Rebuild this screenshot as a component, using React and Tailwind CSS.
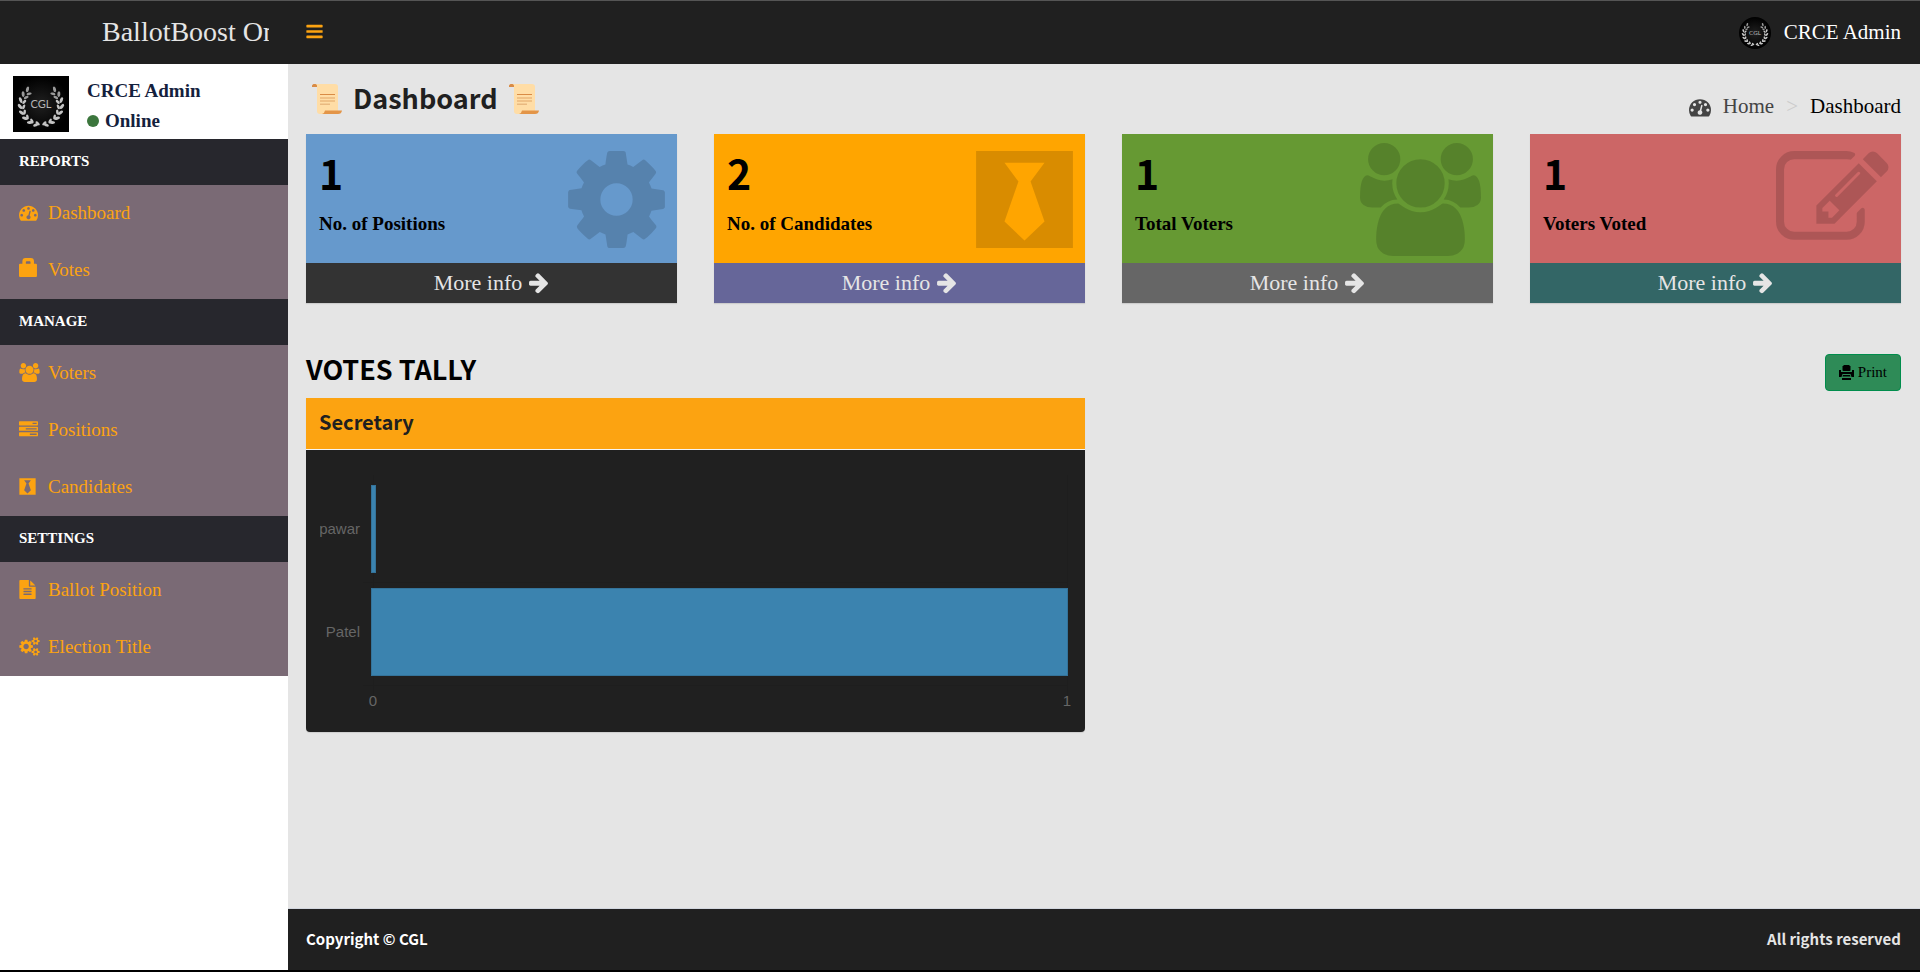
import React from "react";

const ICONS = {
  bars: {
    box: "128 0 1536 1792",
    d: "M1664 1344v128q0 26-19 45t-45 19h-1408q-26 0-45-19t-19-45v-128q0-26 19-45t45-19h1408q26 0 45 19t19 45zm0-512v128q0 26-19 45t-45 19h-1408q-26 0-45-19t-19-45v-128q0-26 19-45t45-19h1408q26 0 45 19t19 45zm0-512v128q0 26-19 45t-45 19h-1408q-26 0-45-19t-19-45v-128q0-26 19-45t45-19h1408q26 0 45 19t19 45z",
  },
  gauge: {
    box: "0 0 1792 1792",
    d: "M384 1152q0-53-37.5-90.5t-90.5-37.5-90.5 37.5-37.5 90.5 37.5 90.5 90.5 37.5 90.5-37.5 37.5-90.5zm192-448q0-53-37.5-90.5t-90.5-37.5-90.5 37.5-37.5 90.5 37.5 90.5 90.5 37.5 90.5-37.5 37.5-90.5zm428 481l101-382q6-26-7.5-48.5t-38.5-29.5-48 6.5-30 39.5l-101 382q-60 5-107 43.5t-63 98.5q-20 77 20 146t117 89 146-20 89-117q16-60-6-117t-72-91zm660-33q0-53-37.5-90.5t-90.5-37.5-90.5 37.5-37.5 90.5 37.5 90.5 90.5 37.5 90.5-37.5 37.5-90.5zm-640-640q0-53-37.5-90.5t-90.5-37.5-90.5 37.5-37.5 90.5 37.5 90.5 90.5 37.5 90.5-37.5 37.5-90.5zm448 192q0-53-37.5-90.5t-90.5-37.5-90.5 37.5-37.5 90.5 37.5 90.5 90.5 37.5 90.5-37.5 37.5-90.5zm320 448q0 261-141 483-19 29-54 29h-1402q-35 0-54-29-141-221-141-483 0-182 71-348t191-286 286-191 348-71 348 71 286 191 191 286 71 348z",
  },
  lock: {
    box: "0 0 18 18",
    d: "M1 5.5h2.2V3.2Q3.2 0 6.2 0h5Q14.200 0 14.200 3.200V5.500h1.800q1 0 1 1V17q0 1-1 1H1q-1 0-1-1V6.500q0-1 1-1zM6.500 5.500h4.400V3.700q0-.7-.7-.7H7.200q-.7 0-.7.7z",
  },
  users: {
    box: "0 0 1920 1792",
    d: "M593 896q-162 5-265 128h-134q-82 0-138-40.5t-56-118.5q0-353 124-353 6 0 43.5 21t97.5 42.5 119 21.500q67 0 133-23-5 37-5 66 0 139 81 256zm1071 637q0 120-73 189.5t-194 69.5h-874q-121 0-194-69.5t-73-189.5q0-53 3.5-103.5t14-109 26.5-108.5 43-97.5 62-81 85.5-53.5 111.5-20q10 0 43 21.5t73 48 107 48 135 21.5 135-21.5 107-48 73-48 43-21.5q61 0 111.5 20t85.5 53.5 62 81 43 97.5 26.5 108.5 14 109 3.5 103.5zm-1024-1277q0 106-75 181t-181 75-181-75-75-181 75-181 181-75 181 75 75 181zm704 384q0 159-112.5 271.5t-271.5 112.5-271.5-112.5-112.5-271.5 112.5-271.5 271.5-112.5 271.5 112.5 112.5 271.5zm576 225q0 78-56 118.5t-138 40.5h-134q-103-123-265-128 81-117 81-256 0-29-5-66 66 23 133 23 59 0 119-21.5t97.5-42.5 43.5-21q124 0 124 353zm-128-609q0 106-75 181t-181 75-181-75-75-181 75-181 181-75 181 75 75 181z",
  },
  tasks: {
    box: "0 0 1792 1792",
    d: "M1024 1408h640v-128h-640v128zm-384-512h1024v-128h-1024v128zm640-512h384v-128h-384v128zm512 832v256q0 26-19 45t-45 19h-1664q-26 0-45-19t-19-45v-256q0-26 19-45t45-19h1664q26 0 45 19t19 45zm0-512v256q0 26-19 45t-45 19h-1664q-26 0-45-19t-19-45v-256q0-26 19-45t45-19h1664q26 0 45 19t19 45zm0-512v256q0 26-19 45t-45 19h-1664q-26 0-45-19t-19-45v-256q0-26 19-45t45-19h1664q26 0 45 19t19 45z",
  },
  tie: {
    box: "128 0 1536 1792",
    d: "M128 128h1536v1536h-1536v-1536zm1085 1115l-221-631 221-297h-634l221 297-221 631 317 304z",
  },
  file: {
    box: "128 0 1536 1792",
    d: "M1596 476q14 14 28 36h-472v-472q22 14 36 28zm-476 164h544v1056q0 40-28 68t-68 28h-1344q-40 0-68-28t-28-68v-1600q0-40 28-68t68-28h800v544q0 40 28 68t68 28zm160 736v-64q0-14-9-23t-23-9h-704q-14 0-23 9t-9 23v64q0 14 9 23t23 9h704q14 0 23-9t9-23zm0-256v-64q0-14-9-23t-23-9h-704q-14 0-23 9t-9 23v64q0 14 9 23t23 9h704q14 0 23-9t9-23zm0-256v-64q0-14-9-23t-23-9h-704q-14 0-23 9t-9 23v64q0 14 9 23t23 9h704q14 0 23-9t9-23z",
  },
  gears: {
    box: "0 0 1920 1792",
    d: "M896 896q0-106-75-181t-181-75-181 75-75 181 75 181 181 75 181-75 75-181zm768 512q0-52-38-90t-90-38-90 38-38 90q0 53 37.5 90.5t90.5 37.5 90.5-37.5 37.5-90.5zm0-1024q0-52-38-90t-90-38-90 38-38 90q0 53 37.5 90.5t90.5 37.5 90.5-37.5 37.5-90.5zm-384 421v185q0 10-7 19.5t-16 10.5l-155 24q-11 35-32 76 34 48 90 115 7 11 7 20 0 12-7 19-23 30-82.5 89.5t-78.5 59.5q-11 0-21-7l-115-90q-37 19-77 31-11 108-23 155-7 24-30 24h-186q-11 0-20-7.5t-10-17.5l-23-153q-34-10-75-31l-118 89q-7 7-20 7-11 0-21-8-144-133-144-160 0-9 7-19 10-14 41-53t47-61q-23-44-35-82l-152-24q-10-1-17-9.5t-7-19.5v-185q0-10 7-19.5t16-10.5l155-24q11-35 32-76-34-48-90-115-7-11-7-20 0-12 7-20 22-30 82-89t79-59q11 0 21 7l115 90q34-18 77-32 11-108 23-154 7-24 30-24h186q11 0 20 7.5t10 17.5l23 153q34 10 75 31l118-89q8-7 20-7 11 0 21 8 144 133 144 160 0 8-7 19-12 16-42 54t-45 60q23 48 34 82l152 23q10 2 17 10.5t7 19.5zm640 533v140q0 16-149 31-12 27-30 52 51 113 51 138 0 4-4 7-122 71-124 71-8 0-46-47t-52-68q-20 2-30 2t-30-2q-14 21-52 68t-46 47q-2 0-124-71-4-3-4-7 0-25 51-138-18-25-30-52-149-15-149-31v-140q0-16 149-31 13-29 30-52-51-113-51-138 0-4 4-7 4-2 35-20t59-34 30-16q8 0 46 46.5t52 67.5q20-2 30-2t30 2q51-71 92-112l6-2q4 0 124 70 4 3 4 7 0 25-51 138 17 23 30 52 149 15 149 31zm0-1024v140q0 16-149 31-12 27-30 52 51 113 51 138 0 4-4 7-122 71-124 71-8 0-46-47t-52-68q-20 2-30 2t-30-2q-14 21-52 68t-46 47q-2 0-124-71-4-3-4-7 0-25 51-138-18-25-30-52-149-15-149-31v-140q0-16 149-31 13-29 30-52-51-113-51-138 0-4 4-7 4-2 35-20t59-34 30-16q8 0 46 46.5t52 67.5q20-2 30-2t30 2q51-71 92-112l6-2q4 0 124 70 4 3 4 7 0 25-51 138 17 23 30 52 149 15 149 31z",
  },
  gear: {
    box: "128 0 1536 1792",
    d: "M1152 896q0-106-75-181t-181-75-181 75-75 181 75 181 181 75 181-75 75-181zm512-109v222q0 12-8 23t-20 13l-185 28q-19 54-39 91 35 50 107 138 10 12 10 25t-9 23q-27 37-99 108t-94 71q-12 0-26-9l-138-108q-44 23-91 38-16 136-29 186-7 28-36 28h-222q-14 0-24.5-8.5t-11.5-21.5l-28-184q-49-16-90-37l-141 107q-10 9-25 9-14 0-25-11-126-114-165-168-7-10-7-23 0-12 8-23 15-21 51-66.5t54-70.5q-27-50-41-99l-183-27q-13-2-21-12.5t-8-23.5v-222q0-12 8-23t19-13l186-28q14-46 39-92-40-57-107-138-10-12-10-24 0-10 9-23 26-36 98.5-107.5t94.5-71.5q13 0 26 10l138 107q44-23 91-38 16-136 29-186 7-28 36-28h222q14 0 24.5 8.5t11.5 21.5l28 184q49 16 90 37l142-107q9-9 24-9 13 0 25 10 129 119 165 170 7 8 7 22 0 12-8 23-15 21-51 66.5t-54 70.5q26 50 41 98l183 28q13 2 21 12.5t8 23.5z",
  },
  edit: {
    box: "0 0 1792 1792",
    d: "M888 1184l116-116-152-152-116 116v56h96v96h56zm440-720q-16-16-33 1l-350 350q-17 17-1 33t33-1l350-350q17-17 1-33zm80 594v190q0 119-84.5 203.5t-203.5 84.5h-832q-119 0-203.5-84.5t-84.5-203.5v-832q0-119 84.5-203.5t203.5-84.5h832q63 0 117 25 15 7 18 23 3 17-9 29l-49 49q-14 14-32 8-23-6-45-6h-832q-66 0-113 47t-47 113v832q0 66 47 113t113 47h832q66 0 113-47t47-113v-126q0-13 9-22l64-64q15-15 35-7t20 29zm-96-738l288 288-672 672h-288v-288zm444 132l-92 92-288-288 92-92q28-28 68-28t68 28l152 152q28 28 28 68t-28 68z",
  },
  arrow: {
    box: "64 0 1600 1792",
    d: "M1600 960q0 54-37 91l-651 651q-39 37-91 37-51 0-90-37l-75-75q-38-38-38-91t38-91l293-293h-704q-52 0-84.500-37.5t-32.500-90.5v-128q0-53 32.5-90.5t84.5-37.5h704l-293-294q-38-36-38-90t38-90l75-75q38-38 90-38 53 0 91 38l651 651q37 35 37 90z",
  },
};

function Icon({ name, className }) {
  const icon = ICONS[name];
  return (
    <svg viewBox={icon.box} className={className} fill="currentColor" aria-hidden="true">
      <path d={icon.d} fillRule={name === "lock" ? "evenodd" : "nonzero"} />
    </svg>
  );
}

function Leaves({ flip }) {
  const steps = [0, 1, 2, 3, 4, 5, 6, 7];
  return (
    <g transform={flip ? "translate(56 0) scale(-1 1)" : undefined}>
      {steps.map((i) => {
        const deg = 97 + i * 18;
        const a = (deg * Math.PI) / 180;
        const x = 28 + 18 * Math.cos(a);
        const y = 29 + 17.5 * Math.sin(a);
        const ox = 28 + 21 * Math.cos(a + 0.12);
        const oy = 29 + 20.5 * Math.sin(a + 0.12);
        return (
          <g key={i} fill={i > 5 ? "#9a9a9a" : "#c4c4c4"}>
            <ellipse cx={ox} cy={oy} rx="3" ry="1.5" transform={`rotate(${deg + 62} ${ox} ${oy})`} />
            <ellipse cx={x - 1.5 * Math.cos(a)} cy={y - 1.5 * Math.sin(a)} rx="2.6" ry="1.3" transform={`rotate(${deg + 125} ${x} ${y})`} />
          </g>
        );
      })}
    </g>
  );
}

function Crest({ className }) {
  return (
    <svg viewBox="0 0 56 56" className={className} role="img" aria-label="CGL">
      <defs>
        <radialGradient id="crest-glow">
          <stop offset="0" stopColor="#202020" />
          <stop offset="1" stopColor="#000000" />
        </radialGradient>
      </defs>
      <rect width="56" height="56" fill="url(#crest-glow)" />
      <Leaves />
      <Leaves flip />
      <text x="28" y="32" textAnchor="middle" fontSize="11" fontFamily="Lato, sans-serif" fill="#b5b5b5">
        CGL
      </text>
    </svg>
  );
}

function Scroll() {
  return (
    <svg viewBox="0 0 30 30" className="size-[30px]" aria-hidden="true">
      <path d="M0 3q0-3 3-3h2v3z" fill="#d98b45" />
      <path d="M2.500 0H23q3 0 3 3v27H8q-3 0-3-3V3q0-3-2.500-3z" fill="#ffdda6" />
      <path d="M0 3q0-3 2.500-3t2.500 3z" fill="#d98b45" />
      <path d="M13 26.500h17q-.5 3.500-4 3.500H10q2.500-.5 3-3.500z" fill="#e39548" />
      <path d="M8 10h15v1H8z" fill="#d98b45" />
      <path d="M8 13.500h15v1H8zM8 16.500h15v1H8z" fill="#e2a566" />
      <path d="M8 19.500h10v1.500H8z" fill="#e9b980" />
    </svg>
  );
}

const MENU = [
  {
    title: "REPORTS",
    items: [
      { label: "Dashboard", icon: "gauge", size: "size-[19px]" },
      { label: "Votes", icon: "lock", size: "size-[19px] mb-1" },
    ],
  },
  {
    title: "MANAGE",
    items: [
      { label: "Voters", icon: "users", size: "h-[19px] w-[21px]" },
      { label: "Positions", icon: "tasks", size: "size-[19px]" },
      { label: "Candidates", icon: "tie", size: "h-[19px] w-[17px]" },
    ],
  },
  {
    title: "SETTINGS",
    items: [
      { label: "Ballot Position", icon: "file", size: "h-[19px] w-[17px]" },
      { label: "Election Title", icon: "gears", size: "h-[19px] w-[21px]" },
    ],
  },
];

const CARDS = [
  { value: "1", label: "No. of Positions", icon: "gear", size: "w-[97px]", body: "bg-[#6699cc]", foot: "bg-[#333333]" },
  { value: "2", label: "No. of Candidates", icon: "tie", size: "w-[97px]", body: "bg-[#ffa500]", foot: "bg-[#666699]" },
  { value: "1", label: "Total Voters", icon: "users", size: "w-[121px]", body: "bg-[#669933]", foot: "bg-[#666666]" },
  { value: "1", label: "Voters Voted", icon: "edit", size: "w-[113px]", body: "bg-[#cc6666]", foot: "bg-[#336666]" },
];

const SANS = "font-['Noto_Sans_CJK_JP',sans-serif] font-bold";

function Sidebar() {
  return (
    <aside className="w-72 shrink-0 bg-white">
      <div className="flex h-[75px] gap-[18px] pl-[13px] pt-3">
        <Crest className="size-14" />
        <div className="text-[19px] font-bold leading-[30px] text-[#14213d]">
          <p>CRCE Admin</p>
          <a href="#status" className="flex items-center gap-1.5">
            <span className="size-3 rounded-full bg-[#3c763d]" />
            Online
          </a>
        </div>
      </div>
      <nav>
        {MENU.map((group) => (
          <section key={group.title}>
            <h2 className="flex h-[46px] items-center bg-[#27272d] pb-0.5 pl-[19px] text-[15px] font-bold text-white">{group.title}</h2>
            <ul className="bg-[#7a6a75]">
              {group.items.map((item) => (
                <li key={item.label}>
                  <a href={`#${item.label}`} className="flex h-[57px] items-center pl-[19px] text-[19px] text-[#fca311]">
                    <span className="w-[29px] pb-0.5">
                      <Icon name={item.icon} className={item.size} />
                    </span>
                    {item.label}
                  </a>
                </li>
              ))}
            </ul>
          </section>
        ))}
      </nav>
    </aside>
  );
}

function StatCard({ card }) {
  return (
    <article className="shadow-[0_1px_1px_rgba(0,0,0,0.1)]">
      <div className={`relative h-[129px] px-[13px] pt-3.5 text-black ${card.body}`}>
        <p className={`text-[41px] leading-[48px] ${SANS}`}>{card.value}</p>
        <p className="pt-3.5 text-[19px] font-bold leading-7">{card.label}</p>
        <Icon name={card.icon} className={`absolute right-3 top-[9px] h-[113px] text-black/15 ${card.size}`} />
      </div>
      <a href="#details" className={`flex h-10 items-center justify-center gap-1.5 pb-0.5 text-[22px] text-[#e5e5e5] ${card.foot}`}>
        More info
        <Icon name="arrow" className="h-[23px] w-[21px]" />
      </a>
    </article>
  );
}

function TallyChart() {
  return (
    <svg viewBox="0 0 751 254" className="block h-auto w-full" fontFamily="'Liberation Sans', sans-serif" fontSize="15" fill="#666666" role="img" aria-label="Votes for Secretary">
      <path d="M53.500 11v220M747.500 11v220M43 118.500h705M43 221.500h705" stroke="#1e1e1e" />
      <rect x="51.500" y="21.500" width="4" height="87" fill="#3b83af" stroke="#34739a" />
      <rect x="51.500" y="124.500" width="696" height="87" fill="#3b83af" stroke="#34739a" />
      <text x="40" y="70" textAnchor="end">pawar</text>
      <text x="40" y="173" textAnchor="end">Patel</text>
      <text x="53" y="242" textAnchor="middle">0</text>
      <text x="747" y="242" textAnchor="middle">1</text>
    </svg>
  );
}

export default function App() {
  return (
    <div className="flex min-h-screen flex-col border-b-2 border-black bg-[#e5e5e5] font-['Liberation_Serif',serif]">
      <header className="flex h-16 items-center border-t border-[#555555] bg-[#202020] pr-[19px]">
        <div className="w-72 pb-0.5 pl-[102px] pr-[19px]">
          <a href="#home" className="block overflow-hidden whitespace-nowrap text-[28px] leading-10 text-[#e5e5e5]">
            BallotBoost Online
          </a>
        </div>
        <button type="button" aria-label="Toggle navigation" className="ml-[18px] pb-0.5 text-[#fca311]">
          <Icon name="bars" className="h-[19px] w-[17px]" />
        </button>
        <a href="#profile" className="ml-auto flex items-center gap-[13px] text-[21px] text-white">
          <Crest className="size-8 rounded-full" />
          CRCE Admin
        </a>
      </header>

      <div className="flex flex-1">
        <Sidebar />
        <div className="flex min-w-0 flex-1 flex-col">
          <main className="flex-1 pl-[18px] pr-[19px]">
            <div className="flex h-[70px] justify-between">
              <h1 className={`flex items-center gap-[11px] pl-1.5 text-[27px] text-[#202020] ${SANS}`}>
                <Scroll />
                <span className="pb-0.5">Dashboard</span>
                <Scroll />
              </h1>
              <ol className="flex items-center gap-3 pt-4 text-[21px] text-black">
                <li>
                  <a href="#home" className="flex items-center gap-3 text-[#444444]">
                    <Icon name="gauge" className="size-[22px]" />
                    Home
                  </a>
                </li>
                <li className="text-[#cccccc]">&gt;</li>
                <li>Dashboard</li>
              </ol>
            </div>

            <div className="grid grid-cols-4 gap-[37px]">
              {CARDS.map((card) => (
                <StatCard key={card.label} card={card} />
              ))}
            </div>

            <div className="mt-[51px] flex h-11 items-start justify-between">
              <h2 className={`text-[27px] leading-[30px] text-black ${SANS}`}>VOTES TALLY</h2>
              <button type="button" className="flex h-[37px] items-center gap-1 rounded border border-[#008d4c] bg-[#2e8b57] px-[13px] text-[15px] text-black">
                <svg viewBox="0 0 15 15" className="size-[15px]" fill="currentColor" aria-hidden="true">
                  <path d="M5 0h5l1.500 1.500V5q0 1-1 1h-6q-1 0-1-1V1.500z" />
                  <path d="M0 5h2v1.500q0 .5.500.5h10q.5 0 .5-.5V5h2v7h-2.500L11.500 9h-8L2.500 12H0z" />
                  <path d="M4 10h7l.5 1.500h-8zM3 13h9v2H3z" />
                </svg>
                Print
              </button>
            </div>

            <div className="grid grid-cols-2 gap-[37px]">
              <section className="overflow-hidden rounded-b bg-[#202020] shadow-[0_1px_1px_rgba(0,0,0,0.1)]">
                <h3 className={`flex h-[52px] items-center border-b border-[#f4f4f4] bg-[#fca311] px-[13px] pb-1 text-[20px] text-[#202020] ${SANS}`}>Secretary</h3>
                <div className="p-3.5">
                  <TallyChart />
                </div>
              </section>
            </div>
          </main>

          <footer className={`flex h-[62px] items-center justify-between border-t border-[#d2d6de] bg-[#202020] pl-[18px] pr-[19px] text-[15px] ${SANS}`}>
            <p className="text-white">Copyright © CGL</p>
            <p className="text-[#e5e5e5]">All rights reserved</p>
          </footer>
        </div>
      </div>
    </div>
  );
}
